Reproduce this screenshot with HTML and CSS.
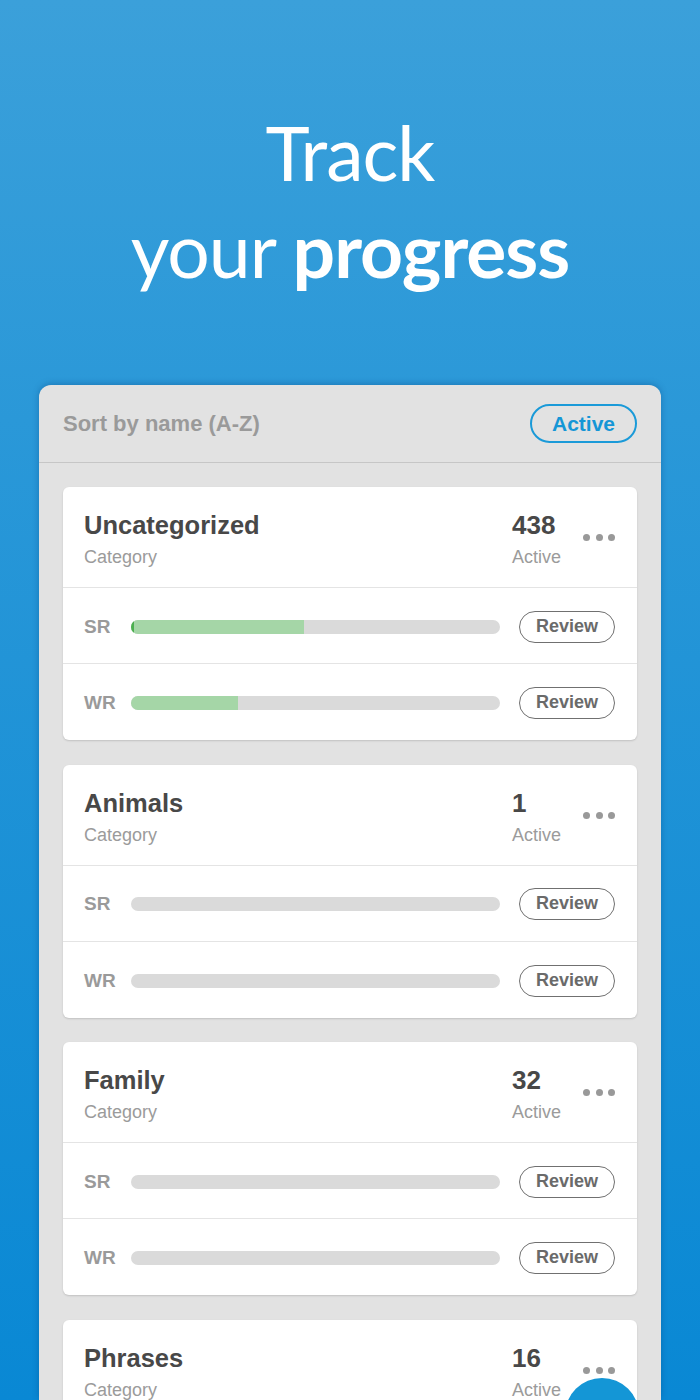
FILE: index.html
```html
<!DOCTYPE html>
<html lang="en">

<head>
    <meta charset="UTF-8">
    <meta name="viewport" content="width=device-width, initial-scale=1.0">
    <title>Track your progress</title>
    <link rel="stylesheet" href="styles.css">
</head>

<body>
    <div class="hero">
        <h1>Track<br>your <b>progress</b></h1>
    </div>
    <div class="panel">
        <div class="panel-head">
            <span class="sort">Sort by name (A-Z)</span>
            <span class="filter">Active</span>
        </div>
        <div class="list">
            <div class="card">
                <div class="card-head">
                    <div class="info">
                        <div class="title">Uncategorized</div>
                        <div class="sub">Category</div>
                    </div>
                    <div class="count">
                        <div class="num">438</div>
                        <div class="sub">Active</div>
                    </div>
                    <span class="more"><i></i><i></i><i></i></span>
                </div>
                <div class="row">
                    <span class="label">SR</span>
                    <div class="bar"><div class="fill start" style="width: 46.8%"></div></div>
                    <span class="review">Review</span>
                </div>
                <div class="row">
                    <span class="label">WR</span>
                    <div class="bar"><div class="fill" style="width: 29%"></div></div>
                    <span class="review">Review</span>
                </div>
            </div>
            <div class="card">
                <div class="card-head">
                    <div class="info">
                        <div class="title">Animals</div>
                        <div class="sub">Category</div>
                    </div>
                    <div class="count">
                        <div class="num">1</div>
                        <div class="sub">Active</div>
                    </div>
                    <span class="more"><i></i><i></i><i></i></span>
                </div>
                <div class="row">
                    <span class="label">SR</span>
                    <div class="bar"></div>
                    <span class="review">Review</span>
                </div>
                <div class="row">
                    <span class="label">WR</span>
                    <div class="bar"></div>
                    <span class="review">Review</span>
                </div>
            </div>
            <div class="card">
                <div class="card-head">
                    <div class="info">
                        <div class="title">Family</div>
                        <div class="sub">Category</div>
                    </div>
                    <div class="count">
                        <div class="num">32</div>
                        <div class="sub">Active</div>
                    </div>
                    <span class="more"><i></i><i></i><i></i></span>
                </div>
                <div class="row">
                    <span class="label">SR</span>
                    <div class="bar"></div>
                    <span class="review">Review</span>
                </div>
                <div class="row">
                    <span class="label">WR</span>
                    <div class="bar"></div>
                    <span class="review">Review</span>
                </div>
            </div>
            <div class="card">
                <div class="card-head">
                    <div class="info">
                        <div class="title">Phrases</div>
                        <div class="sub">Category</div>
                    </div>
                    <div class="count">
                        <div class="num">16</div>
                        <div class="sub">Active</div>
                    </div>
                    <span class="more"><i></i><i></i><i></i></span>
                </div>
            </div>
        </div>
    </div>
    <span class="fab"></span>
</body>

</html>
```

FILE: styles.css
```css
body {
    margin: 0;
    width: 700px;
    height: 1400px;
    overflow: hidden;
    position: relative;
    background: linear-gradient(#3ba0da, #2a98d8 30%, #0988d4);
    font-family: "Liberation Sans", Arial, sans-serif;
}

.hero {
    height: 385px;
    padding-top: 104px;
    box-sizing: border-box;
    text-align: center;
}

.hero h1 {
    margin: 0;
    color: #fff;
    font-family: Lato, sans-serif;
    font-weight: 400;
    font-size: 75px;
    line-height: 97px;
    letter-spacing: -1px;
}

.hero h1 b {
    font-weight: 700;
}

.panel {
    margin: 0 39px;
    height: 1015px;
    background-color: #e2e2e2;
    border-radius: 12px 12px 0 0;
    box-shadow: 0 -1px 6px rgba(0, 60, 120, 0.35);
}

.panel-head {
    height: 78px;
    box-sizing: border-box;
    display: flex;
    align-items: center;
    justify-content: space-between;
    padding: 0 24px;
    border-bottom: 1px solid #c6c6c6;
}

.sort {
    color: #9a9a9a;
    font-size: 22px;
    font-weight: 700;
}

.filter {
    width: 107px;
    height: 39px;
    line-height: 35px;
    box-sizing: border-box;
    border: 2px solid #1a9ad8;
    border-radius: 20px;
    text-align: center;
    color: #1596d6;
    font-size: 21px;
    font-weight: 700;
}

.list {
    display: flex;
    flex-direction: column;
    gap: 24.5px;
    padding: 24px;
}

.card {
    background-color: #fff;
    border-radius: 6px;
    box-shadow: 0 1px 2px rgba(0, 0, 0, 0.15);
}

.card-head {
    height: 101px;
    box-sizing: border-box;
    display: flex;
    align-items: flex-start;
    padding: 23px 22px 0 21px;
    border-bottom: 1px solid #e4e4e4;
}

.info {
    flex: 1;
}

.title,
.num {
    color: #484848;
    font-size: 25.5px;
    font-weight: 700;
    line-height: 30px;
}

.num {
    font-size: 26px;
}

.sub {
    margin-top: 6px;
    color: #9b9b9b;
    font-size: 18px;
    line-height: 22px;
}

.count {
    width: 71px;
}

.more {
    display: flex;
    gap: 5.5px;
    margin-top: 24px;
}

.more i {
    width: 7px;
    height: 7px;
    border-radius: 50%;
    background-color: #999;
}

.row {
    height: 76px;
    box-sizing: border-box;
    display: flex;
    align-items: center;
    padding: 2px 22px 0 21px;
    border-bottom: 1px solid #e4e4e4;
}

.row:last-child {
    border-bottom: none;
}

.label {
    width: 47px;
    color: #9a9a9a;
    font-size: 19px;
    font-weight: 700;
}

.bar {
    flex: 1;
    height: 14px;
    border-radius: 7px;
    background-color: #dadada;
    overflow: hidden;
}

.fill {
    height: 100%;
    background-color: #a5d6a7;
}

.fill.start {
    border-left: 3px solid #4caf50;
    box-sizing: border-box;
}

.review {
    margin-left: 19px;
    width: 96px;
    height: 32px;
    line-height: 29px;
    box-sizing: border-box;
    border: 1.5px solid #707070;
    border-radius: 16px;
    text-align: center;
    color: #6a6a6a;
    font-size: 18px;
    font-weight: 700;
}

.fab {
    position: absolute;
    left: 565px;
    top: 1378px;
    width: 74px;
    height: 74px;
    border-radius: 50%;
    background-color: #1496d6;
}
```
